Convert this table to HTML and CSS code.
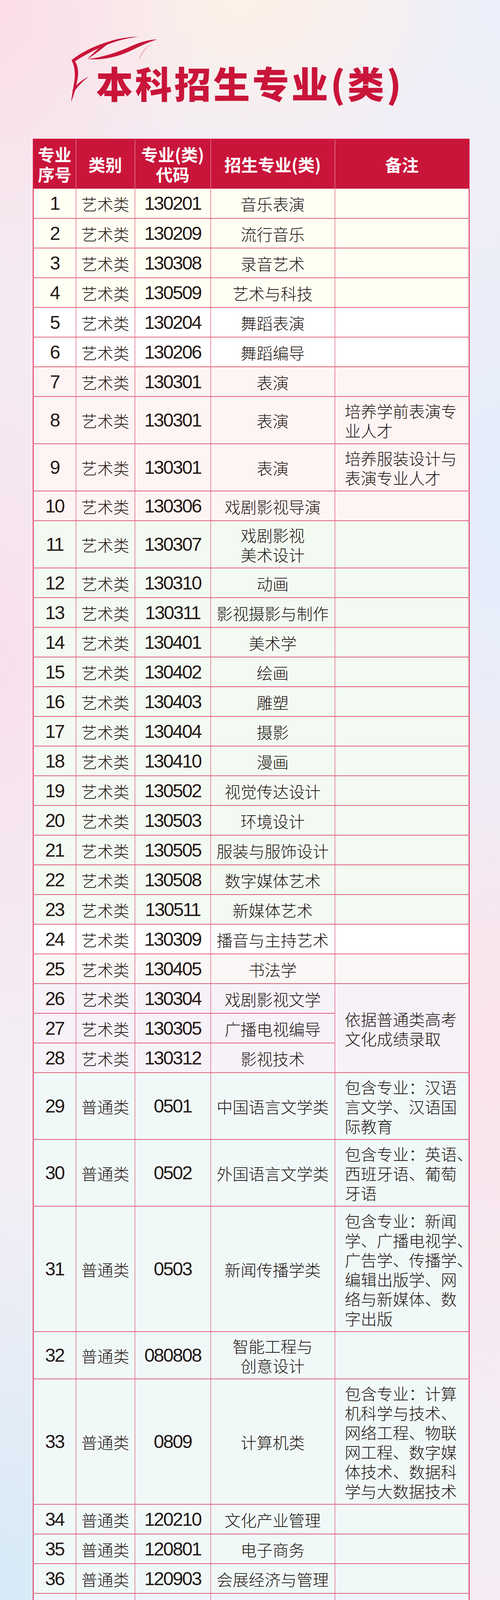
FILE: index.html
```html
<!DOCTYPE html>
<html lang="zh-CN">
<head>
<meta charset="utf-8">
<title>本科招生专业(类)</title>
<link rel="stylesheet" href="styles.css">
</head>
<body>
<header class="masthead">
  <svg class="mark" viewBox="170 85 250 185" aria-hidden="true">
    <path d="M183,154 C210,132 245,116 283,105 C306,98 330,94 355,94 C330,97 307,102 286,110 C250,123 218,140 191,158 Z"/>
    <path d="M183,154 L192,157 C201,170 202,190 197,210 C193,230 188,247 182,261 C184,245 187,228 190,210 C193,190 192,170 183,154 Z"/>
    <path d="M274,108 C257,119 240,134 224,151 C242,140 258,127 277,112 Z"/>
    <path d="M224,151 C262,147 302,134 338,117 C362,107 383,101 402,101 C385,106 365,115 343,126 C303,146 263,155 224,151 Z"/>
    <path d="M402,101 C381,113 362,133 355,158 C359,138 372,121 394,106 Z"/>
    <path d="M185,232 C195,216 210,204 228,196 C213,207 201,218 189,236 Z"/>
  </svg>
  <h1 class="title">本科招生专业(类)</h1>
</header>

<main class="table-wrap">
  <table class="plan">
    <colgroup>
      <col class="c-no"><col class="c-type"><col class="c-code"><col class="c-major"><col class="c-remark">
    </colgroup>
    <thead>
      <tr class="head">
        <th><span class="hl">专业</span><span class="hl">序号</span></th><th>类别</th><th><span class="hl">专业(类)</span><span class="hl">代码</span></th><th>招生专业(类)</th><th>备注</th>
      </tr>
    </thead>
    <tbody>
      <tr class="g-ivory"><td class="num">1</td><td>艺术类</td><td class="num">130201</td><td class="major">音乐表演</td><td class="remark"></td></tr>
      <tr class="g-ivory"><td class="num">2</td><td>艺术类</td><td class="num">130209</td><td class="major">流行音乐</td><td class="remark"></td></tr>
      <tr class="g-ivory"><td class="num">3</td><td>艺术类</td><td class="num">130308</td><td class="major">录音艺术</td><td class="remark"></td></tr>
      <tr class="g-ivory"><td class="num">4</td><td>艺术类</td><td class="num">130509</td><td class="major">艺术与科技</td><td class="remark"></td></tr>
      <tr class="g-white"><td class="num">5</td><td>艺术类</td><td class="num">130204</td><td class="major">舞蹈表演</td><td class="remark"></td></tr>
      <tr class="g-white"><td class="num">6</td><td>艺术类</td><td class="num">130206</td><td class="major">舞蹈编导</td><td class="remark"></td></tr>
      <tr class="g-rose"><td class="num">7</td><td>艺术类</td><td class="num">130301</td><td class="major">表演</td><td class="remark"></td></tr>
      <tr class="g-rose"><td class="num">8</td><td>艺术类</td><td class="num">130301</td><td class="major">表演</td><td class="remark">培养学前表演专<br>业人才</td></tr>
      <tr class="g-rose"><td class="num">9</td><td>艺术类</td><td class="num">130301</td><td class="major">表演</td><td class="remark">培养服装设计与<br>表演专业人才</td></tr>
      <tr class="g-rose"><td class="num">10</td><td>艺术类</td><td class="num">130306</td><td class="major">戏剧影视导演</td><td class="remark"></td></tr>
      <tr class="g-mint"><td class="num">11</td><td>艺术类</td><td class="num">130307</td><td class="major">戏剧影视<br>美术设计</td><td class="remark"></td></tr>
      <tr class="g-mint"><td class="num">12</td><td>艺术类</td><td class="num">130310</td><td class="major">动画</td><td class="remark"></td></tr>
      <tr class="g-mint"><td class="num">13</td><td>艺术类</td><td class="num">130311</td><td class="major">影视摄影与制作</td><td class="remark"></td></tr>
      <tr class="g-mint"><td class="num">14</td><td>艺术类</td><td class="num">130401</td><td class="major">美术学</td><td class="remark"></td></tr>
      <tr class="g-mint"><td class="num">15</td><td>艺术类</td><td class="num">130402</td><td class="major">绘画</td><td class="remark"></td></tr>
      <tr class="g-mint"><td class="num">16</td><td>艺术类</td><td class="num">130403</td><td class="major">雕塑</td><td class="remark"></td></tr>
      <tr class="g-mint"><td class="num">17</td><td>艺术类</td><td class="num">130404</td><td class="major">摄影</td><td class="remark"></td></tr>
      <tr class="g-mint"><td class="num">18</td><td>艺术类</td><td class="num">130410</td><td class="major">漫画</td><td class="remark"></td></tr>
      <tr class="g-mint"><td class="num">19</td><td>艺术类</td><td class="num">130502</td><td class="major">视觉传达设计</td><td class="remark"></td></tr>
      <tr class="g-mint"><td class="num">20</td><td>艺术类</td><td class="num">130503</td><td class="major">环境设计</td><td class="remark"></td></tr>
      <tr class="g-mint"><td class="num">21</td><td>艺术类</td><td class="num">130505</td><td class="major">服装与服饰设计</td><td class="remark"></td></tr>
      <tr class="g-mint"><td class="num">22</td><td>艺术类</td><td class="num">130508</td><td class="major">数字媒体艺术</td><td class="remark"></td></tr>
      <tr class="g-mint"><td class="num">23</td><td>艺术类</td><td class="num">130511</td><td class="major">新媒体艺术</td><td class="remark"></td></tr>
      <tr class="g-white"><td class="num">24</td><td>艺术类</td><td class="num">130309</td><td class="major">播音与主持艺术</td><td class="remark"></td></tr>
      <tr class="g-blush"><td class="num">25</td><td>艺术类</td><td class="num">130405</td><td class="major">书法学</td><td class="remark"></td></tr>
      <tr class="g-lilac"><td class="num">26</td><td>艺术类</td><td class="num">130304</td><td class="major">戏剧影视文学</td><td class="remark" rowspan="3">依据普通类高考<br>文化成绩录取</td></tr>
      <tr class="g-lilac"><td class="num">27</td><td>艺术类</td><td class="num">130305</td><td class="major">广播电视编导</td></tr>
      <tr class="g-lilac"><td class="num">28</td><td>艺术类</td><td class="num">130312</td><td class="major">影视技术</td></tr>
      <tr class="g-aqua"><td class="num">29</td><td>普通类</td><td class="num">0501</td><td class="major">中国语言文学类</td><td class="remark">包含专业：汉语<br>言文学、汉语国<br>际教育</td></tr>
      <tr class="g-aqua"><td class="num">30</td><td>普通类</td><td class="num">0502</td><td class="major">外国语言文学类</td><td class="remark">包含专业：英语、<br>西班牙语、葡萄<br>牙语</td></tr>
      <tr class="g-aqua"><td class="num">31</td><td>普通类</td><td class="num">0503</td><td class="major">新闻传播学类</td><td class="remark">包含专业：新闻<br>学、广播电视学、<br>广告学、传播学、<br>编辑出版学、网<br>络与新媒体、数<br>字出版</td></tr>
      <tr class="g-aqua"><td class="num">32</td><td>普通类</td><td class="num">080808</td><td class="major">智能工程与<br>创意设计</td><td class="remark"></td></tr>
      <tr class="g-aqua"><td class="num">33</td><td>普通类</td><td class="num">0809</td><td class="major">计算机类</td><td class="remark">包含专业：计算<br>机科学与技术、<br>网络工程、物联<br>网工程、数字媒<br>体技术、数据科<br>学与大数据技术</td></tr>
      <tr class="g-aqua"><td class="num">34</td><td>普通类</td><td class="num">120210</td><td class="major">文化产业管理</td><td class="remark"></td></tr>
      <tr class="g-aqua"><td class="num">35</td><td>普通类</td><td class="num">120801</td><td class="major">电子商务</td><td class="remark"></td></tr>
      <tr class="g-aqua"><td class="num">36</td><td>普通类</td><td class="num">120903</td><td class="major">会展经济与管理</td><td class="remark"></td></tr>
      <tr class="g-peri"><td class="num">37</td><td>体育类</td><td class="num">040206</td><td class="major">运动康复</td><td class="remark"></td></tr>
      <tr class="g-peri"><td class="num">38</td><td>体育类</td><td class="num">040207</td><td class="major">休闲体育</td><td class="remark"></td></tr>
      <tr class="g-peri"><td class="num">39</td><td>体育类</td><td class="num">040210</td><td class="major">电子竞技<br>运动与管理</td><td class="remark"></td></tr>
    </tbody>
  </table>
</main>

<footer class="note">
  <p><strong>注：</strong>各专业分省分专业计划以各省（自治区、直辖市）公布的2024年招生计划为准。</p>
</footer>
</body>
</html>
```

FILE: styles.css
```css
html, body {
  margin: 0;
  padding: 0;
}

body {
  width: 1280px;
  height: 4567px;
  overflow: hidden;
  font-family: "Noto Sans CJK SC", "Noto Sans", sans-serif;
  color: #231815;
  background-color: #f3eef5;
  background-image:
    radial-gradient(700px 1200px at 0 0, #fcdde6 0%, rgba(252, 221, 230, 0) 75%),
    radial-gradient(800px 520px at 48% 0, #fdf0e7 0%, rgba(253, 240, 231, 0) 75%),
    radial-gradient(700px 900px at 100% 0, #ecf0fa 0%, rgba(236, 240, 250, 0) 75%),
    radial-gradient(760px 1500px at 100% 1300px, #e3edfb 0%, rgba(227, 237, 251, 0) 72%),
    radial-gradient(760px 1500px at 0 1700px, #f8e0ec 0%, rgba(248, 224, 236, 0) 72%),
    radial-gradient(760px 1500px at 100% 2700px, #fae3ec 0%, rgba(250, 227, 236, 0) 72%),
    radial-gradient(900px 1500px at 0 4100px, #d5eaf7 0%, rgba(213, 234, 247, 0) 72%),
    radial-gradient(800px 900px at 100% 4567px, #fce5ec 0%, rgba(252, 229, 236, 0) 72%);
}

/* ---------- masthead ---------- */
.masthead {
  position: relative;
  height: 355px;
}

.mark {
  position: absolute;
  left: 170px;
  top: 85px;
  width: 250px;
  height: 185px;
  fill: #c9153a;
}

.title {
  margin: 0;
  padding: 164px 0 0 246px;
  font-size: 94px;
  line-height: 94px;
  font-weight: 900;
  letter-spacing: 6px;
  color: #c9153a;
}

/* ---------- table ---------- */
.table-wrap {
  padding: 0 0 0 84px;
}

.plan {
  width: 1116px;
  table-layout: fixed;
  border-collapse: collapse;
  border: 2px solid #d41a42;
  border-bottom: 3px solid #d3143c;
}

.c-no { width: 109px; }
.c-type { width: 151px; }
.c-code { width: 194px; }
.c-major { width: 318px; }
.c-remark { width: 344px; }

.head {
  height: 127px;
  background: #c9153a;
}

.head th {
  padding: 0;
  color: #ffffff;
  font-size: 43px;
  line-height: 51px;
  font-weight: 700;
  text-align: center;
  vertical-align: middle;
  border-right: 1px solid rgba(255, 220, 226, 0.75);
}

.head th .hl {
  display: block;
  height: 51px;
  overflow: visible;
}

.head th:last-child {
  border-right: 2px solid #d41a42;
}

.plan tbody tr {
  height: 76px;
}

.plan td {
  padding: 10px 0 9px;
  font-size: 41px;
  line-height: 50px;
  font-weight: 300;
  text-align: center;
  vertical-align: middle;
  white-space: nowrap;
  border-right: 1px solid #dc2a4f;
  border-bottom: 2px solid #e3607a;
}

.plan td.num {
  font-family: "Liberation Sans", "Noto Sans", sans-serif;
  font-weight: 400;
  font-size: 48px;
  letter-spacing: -2.5px;
}

.plan td.remark {
  text-align: left;
  padding-left: 25px;
  padding-right: 20px;
}

.g-ivory { background: #fffff3; }
.g-white { background: #ffffff; }
.g-rose { background: #fff4f4; }
.g-mint { background: #f3faf2; }
.g-blush { background: #faf7f6; }
.g-lilac { background: #f7f1f8; }
.g-aqua { background: #f0f9f8; }
.g-peri { background: #f3f4fb; }

/* ---------- note ---------- */
.note {
  padding: 0 90px 0 88px;
  margin-top: 32px;
}

.note p {
  margin: 0;
  font-size: 42px;
  line-height: 70px;
  font-weight: 300;
  text-indent: 87px;
}

.note strong {
  font-weight: 700;
}
```
